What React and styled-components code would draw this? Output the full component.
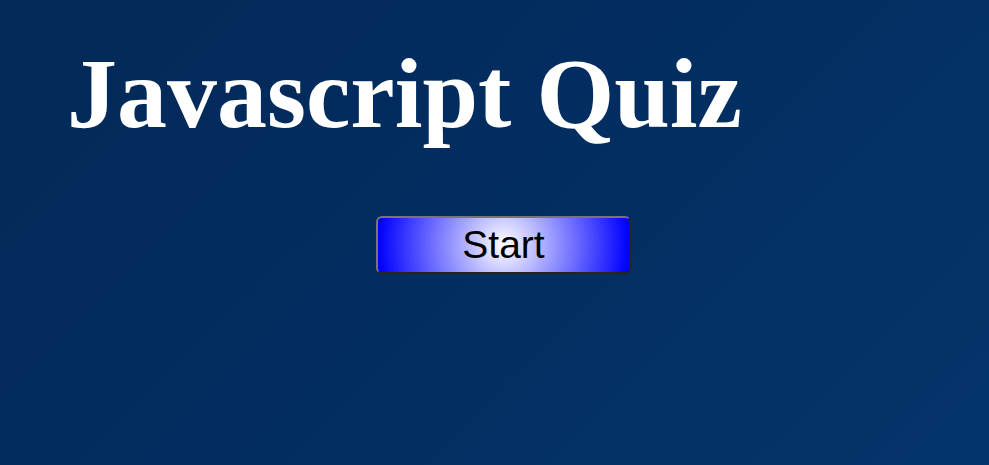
import React from "react";
import styled, { createGlobalStyle } from "styled-components";

const Global = createGlobalStyle`
  html, body { margin: 0; padding: 0; height: 100%; }
  body {
    background: linear-gradient(135deg, #022957 0%, #032e62 55%, #04356c 100%);
    min-height: 465px;
    overflow: hidden;
  }
`;

const Page = styled.main`
  width: 989px;
  height: 465px;
  display: flex;
  flex-direction: column;
  box-sizing: border-box;
  padding: 34px 0 0 67px;
`;

const Title = styled.h1`
  margin: 0;
  font-family: "Liberation Serif", "Times New Roman", serif;
  font-weight: bold;
  font-size: 100px;
  line-height: 1.2;
  color: #ffffff;
`;

const Actions = styled.div`
  display: flex;
  padding: 62px 0 0 309px;
`;

const StartButton = styled.button`
  width: 255px;
  height: 58px;
  box-sizing: border-box;
  border: 2px solid;
  border-color: #767676 #242424 #242424 #767676;
  border-radius: 6px;
  background: radial-gradient(circle farthest-side at 50% 50%, #ffffff 0%, #0000ff 100%);
  font-family: "Liberation Sans", Arial, sans-serif;
  font-size: 39px;
  line-height: 1;
  color: #000;
  padding: 0 0 2px;
  cursor: pointer;
`;

export default function App() {
  return (
    <>
      <Global />
      <Page>
        <Title>Javascript Quiz</Title>
        <Actions>
          <StartButton>Start</StartButton>
        </Actions>
      </Page>
    </>
  );
}
